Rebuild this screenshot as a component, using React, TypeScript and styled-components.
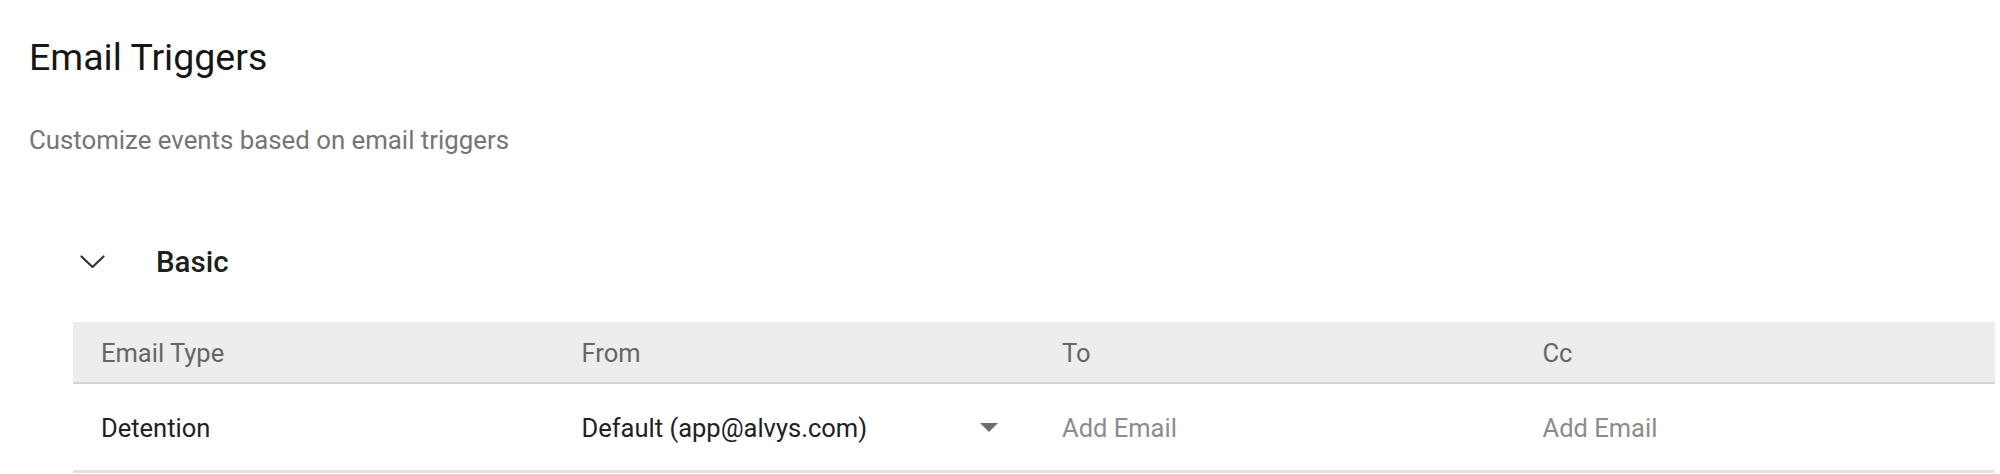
import React from "react";
import styled, { createGlobalStyle } from "styled-components";

const GlobalStyle = createGlobalStyle`
  html, body {
    margin: 0;
    padding: 0;
    background: #ffffff;
  }
  body {
    font-family: Roboto, "Liberation Sans", Arial, sans-serif;
    color: #212121;
  }
`;

const Page = styled.div`
  width: 2000px;
  height: 474px;
  overflow: hidden;
  box-sizing: border-box;
  padding: 35px 5px 0 29px;
`;

const Title = styled.h1`
  margin: 0;
  font-size: 37.5px;
  line-height: 44px;
  font-weight: 400;
  color: #161616;
`;

const Subtitle = styled.p`
  margin: 45px 0 0;
  font-size: 25.8px;
  line-height: 32px;
  color: #757575;
`;

const Section = styled.section`
  margin: 88px 0 0 44px;
`;

const SectionHeader = styled.div`
  display: flex;
  align-items: center;
  height: 36px;
  padding-left: 7px;
  gap: 51px;
`;

const SectionTitle = styled.span`
  font-size: 29.5px;
  line-height: 36px;
  font-weight: 500;
  color: #1f1f1f;
`;

const Table = styled.div`
  margin-top: 42px;
`;

const Row = styled.div<{ $head?: boolean }>`
  display: grid;
  grid-template-columns: repeat(4, 1fr);
  align-items: center;
  height: ${(p) => (p.$head ? "60px" : "86px")};
  background: ${(p) => (p.$head ? "#ededed" : "#ffffff")};
  border-bottom: ${(p) => (p.$head ? "2px solid #d4d4d4" : "3px solid #e2e2e2")};
`;

const Cell = styled.div<{ $tone?: "head" | "value" | "muted" }>`
  display: flex;
  align-items: center;
  justify-content: space-between;
  padding: ${(p) => (p.$tone === "head" ? "2px" : "1px")} 36px 0 28px;
  font-size: 25.5px;
  line-height: 30px;
  color: ${(p) =>
    p.$tone === "head" ? "#666666" : p.$tone === "muted" ? "#8c8c8c" : "#212121"};
`;

const Chevron = () => (
  <svg width="25" height="14" viewBox="0 0 25 14" fill="none">
    <polyline
      points="1.5,1.5 12.5,12 23.5,1.5"
      stroke="#333333"
      strokeWidth="2.2"
      strokeLinecap="round"
      strokeLinejoin="round"
    />
  </svg>
);

const Caret = () => (
  <svg width="18" height="9" viewBox="0 0 18 9">
    <polygon points="0,0 18,0 9,9" fill="#6e6e6e" />
  </svg>
);

const columns = ["Email Type", "From", "To", "Cc"];

const App = () => {
  return (
    <Page>
      <GlobalStyle />
      <Title>Email Triggers</Title>
      <Subtitle>Customize events based on email triggers</Subtitle>
      <Section>
        <SectionHeader>
          <Chevron />
          <SectionTitle>Basic</SectionTitle>
        </SectionHeader>
        <Table>
          <Row $head>
            {columns.map((c) => (
              <Cell key={c} $tone="head">
                {c}
              </Cell>
            ))}
          </Row>
          <Row>
            <Cell>Detention</Cell>
            <Cell>
              <span>Default (app@alvys.com)</span>
              <Caret />
            </Cell>
            <Cell $tone="muted">Add Email</Cell>
            <Cell $tone="muted">Add Email</Cell>
          </Row>
        </Table>
      </Section>
    </Page>
  );
};

export default App;
